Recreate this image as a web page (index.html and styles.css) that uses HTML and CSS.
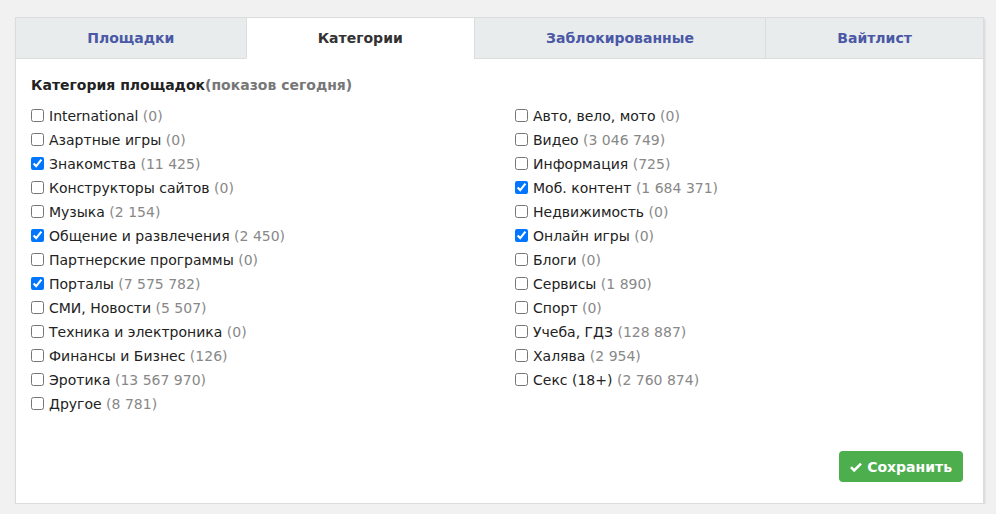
FILE: index.html
```html
<!DOCTYPE html>
<html lang="ru">
<head>
    <meta charset="UTF-8">
    <meta name="viewport" content="width=device-width, initial-scale=1.0">
    <link rel="stylesheet" href="styles.css">
    <title>Категории</title>
</head>
<body>
    <div class="panel">
        <div class="tabs">
            <a class="tab" href="#">Площадки</a>
            <a class="tab active" href="#">Категории</a>
            <a class="tab" href="#">Заблокированные</a>
            <a class="tab" href="#">Вайтлист</a>
        </div>

        <div class="panel-body">
            <h3 class="title">Категория площадок<span class="muted">(показов сегодня)</span></h3>

            <div class="categories">
                <label class="cat"><input type="checkbox">International <span class="count">(0)</span></label>
                <label class="cat"><input type="checkbox">Авто, вело, мото <span class="count">(0)</span></label>
                <label class="cat"><input type="checkbox">Азартные игры <span class="count">(0)</span></label>
                <label class="cat"><input type="checkbox">Видео <span class="count">(3 046 749)</span></label>
                <label class="cat"><input type="checkbox" checked>Знакомства <span class="count">(11 425)</span></label>
                <label class="cat"><input type="checkbox">Информация <span class="count">(725)</span></label>
                <label class="cat"><input type="checkbox">Конструкторы сайтов <span class="count">(0)</span></label>
                <label class="cat"><input type="checkbox" checked>Моб. контент <span class="count">(1 684 371)</span></label>
                <label class="cat"><input type="checkbox">Музыка <span class="count">(2 154)</span></label>
                <label class="cat"><input type="checkbox">Недвижимость <span class="count">(0)</span></label>
                <label class="cat"><input type="checkbox" checked>Общение и развлечения <span class="count">(2 450)</span></label>
                <label class="cat"><input type="checkbox" checked>Онлайн игры <span class="count">(0)</span></label>
                <label class="cat"><input type="checkbox">Партнерские программы <span class="count">(0)</span></label>
                <label class="cat"><input type="checkbox">Блоги <span class="count">(0)</span></label>
                <label class="cat"><input type="checkbox" checked>Порталы <span class="count">(7 575 782)</span></label>
                <label class="cat"><input type="checkbox">Сервисы <span class="count">(1 890)</span></label>
                <label class="cat"><input type="checkbox">СМИ, Новости <span class="count">(5 507)</span></label>
                <label class="cat"><input type="checkbox">Спорт <span class="count">(0)</span></label>
                <label class="cat"><input type="checkbox">Техника и электроника <span class="count">(0)</span></label>
                <label class="cat"><input type="checkbox">Учеба, ГДЗ <span class="count">(128 887)</span></label>
                <label class="cat"><input type="checkbox">Финансы и Бизнес <span class="count">(126)</span></label>
                <label class="cat"><input type="checkbox">Халява <span class="count">(2 954)</span></label>
                <label class="cat"><input type="checkbox">Эротика <span class="count">(13 567 970)</span></label>
                <label class="cat"><input type="checkbox">Секс (18+) <span class="count">(2 760 874)</span></label>
                <label class="cat"><input type="checkbox">Другое <span class="count">(8 781)</span></label>
            </div>

            <div class="actions">
                <button class="btn-save" type="button">
                    <svg width="12" height="10" viewBox="0 0 12 10"><path d="M1 5.2l3.2 3.2L11 1.6" fill="none" stroke="#fff" stroke-width="2.6"/></svg>
                    Сохранить
                </button>
            </div>
        </div>
    </div>
</body>
</html>
```

FILE: styles.css
```css
body {
    margin: 0;
    padding: 17px 12px 0 15px;
    background-color: #f1f1f1;
    font-family: "DejaVu Sans", Verdana, sans-serif;
    font-size: 14px;
    color: #222;
}

.panel {
    background-color: #fff;
    border: 1px solid #dcdcdc;
    box-shadow: 1px 2px 2px rgba(0, 0, 0, 0.12);
    height: 487px;
    box-sizing: border-box;
}

.tabs {
    display: flex;
}

.tab {
    flex: auto;
    text-align: center;
    height: 40px;
    line-height: 40px;
    background-color: #e8ecec;
    border-bottom: 1px solid #dcdcdc;
    border-left: 1px solid #dcdcdc;
    color: #4a58a6;
    font-weight: bold;
    text-decoration: none;
}

.tab:first-child {
    border-left: none;
}

.tab.active {
    background-color: #fff;
    border-bottom-color: #fff;
    color: #333;
}

.panel-body {
    padding: 18px 15px 0 15px;
}

.title {
    margin: 0 0 11px 0;
    font-size: 14px;
    font-weight: bold;
    color: #222;
}

.title .muted {
    color: #777;
}

.categories {
    display: grid;
    grid-template-columns: 484px 1fr;
    grid-auto-rows: 24px;
}

.cat {
    display: block;
    white-space: nowrap;
    line-height: 24px;
}

.cat input {
    margin: 0 5px 0 0;
    width: 13px;
    height: 13px;
    vertical-align: -1px;
}

.count {
    color: #888;
}

.actions {
    display: flex;
    justify-content: flex-end;
    margin-top: 35px;
    padding-right: 5px;
}

.btn-save {
    display: flex;
    align-items: center;
    gap: 5px;
    background-color: #4cae4c;
    color: #fff;
    border: none;
    border-radius: 4px;
    height: 31px;
    padding: 0 11px 0 11px;
    font-family: "DejaVu Sans", Verdana, sans-serif;
    font-size: 14px;
    font-weight: bold;
}
```
